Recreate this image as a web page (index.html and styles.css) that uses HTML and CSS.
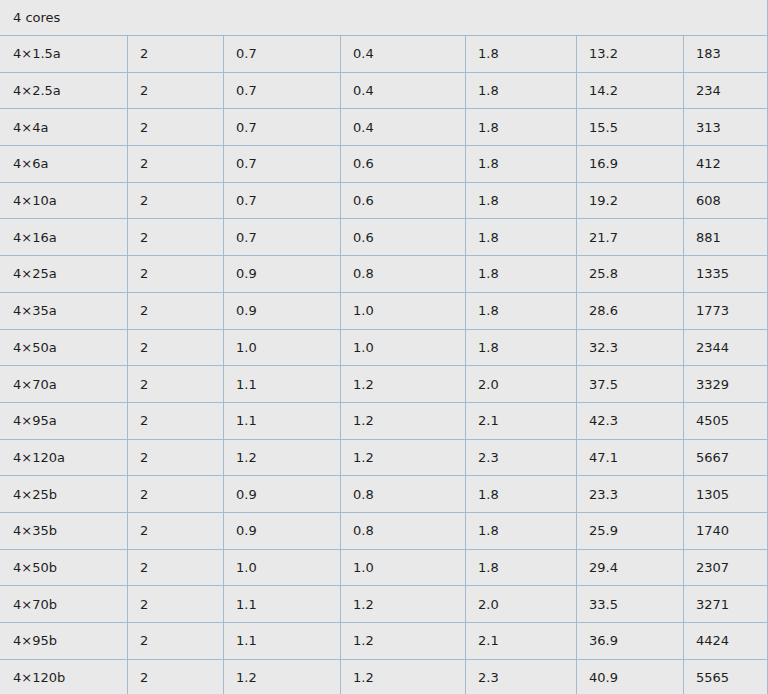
FILE: index.html
```html
<!DOCTYPE html>
<html>
<head>
<meta charset="utf-8">
<link rel="stylesheet" href="styles.css">
</head>
<body>
<table class="spec">
<colgroup>
<col class="c1"><col class="c2"><col class="c3"><col class="c4"><col class="c5"><col class="c6"><col class="c7">
</colgroup>
<tbody>
<tr class="head"><td colspan="7">4 cores</td></tr>
<tr><td>4×1.5a</td><td>2</td><td>0.7</td><td>0.4</td><td>1.8</td><td>13.2</td><td>183</td></tr>
<tr><td>4×2.5a</td><td>2</td><td>0.7</td><td>0.4</td><td>1.8</td><td>14.2</td><td>234</td></tr>
<tr><td>4×4a</td><td>2</td><td>0.7</td><td>0.4</td><td>1.8</td><td>15.5</td><td>313</td></tr>
<tr><td>4×6a</td><td>2</td><td>0.7</td><td>0.6</td><td>1.8</td><td>16.9</td><td>412</td></tr>
<tr><td>4×10a</td><td>2</td><td>0.7</td><td>0.6</td><td>1.8</td><td>19.2</td><td>608</td></tr>
<tr><td>4×16a</td><td>2</td><td>0.7</td><td>0.6</td><td>1.8</td><td>21.7</td><td>881</td></tr>
<tr><td>4×25a</td><td>2</td><td>0.9</td><td>0.8</td><td>1.8</td><td>25.8</td><td>1335</td></tr>
<tr><td>4×35a</td><td>2</td><td>0.9</td><td>1.0</td><td>1.8</td><td>28.6</td><td>1773</td></tr>
<tr><td>4×50a</td><td>2</td><td>1.0</td><td>1.0</td><td>1.8</td><td>32.3</td><td>2344</td></tr>
<tr><td>4×70a</td><td>2</td><td>1.1</td><td>1.2</td><td>2.0</td><td>37.5</td><td>3329</td></tr>
<tr><td>4×95a</td><td>2</td><td>1.1</td><td>1.2</td><td>2.1</td><td>42.3</td><td>4505</td></tr>
<tr><td>4×120a</td><td>2</td><td>1.2</td><td>1.2</td><td>2.3</td><td>47.1</td><td>5667</td></tr>
<tr><td>4×25b</td><td>2</td><td>0.9</td><td>0.8</td><td>1.8</td><td>23.3</td><td>1305</td></tr>
<tr><td>4×35b</td><td>2</td><td>0.9</td><td>0.8</td><td>1.8</td><td>25.9</td><td>1740</td></tr>
<tr><td>4×50b</td><td>2</td><td>1.0</td><td>1.0</td><td>1.8</td><td>29.4</td><td>2307</td></tr>
<tr><td>4×70b</td><td>2</td><td>1.1</td><td>1.2</td><td>2.0</td><td>33.5</td><td>3271</td></tr>
<tr><td>4×95b</td><td>2</td><td>1.1</td><td>1.2</td><td>2.1</td><td>36.9</td><td>4424</td></tr>
<tr><td>4×120b</td><td>2</td><td>1.2</td><td>1.2</td><td>2.3</td><td>40.9</td><td>5565</td></tr>
</tbody>
</table>
</body>
</html>
```
FILE: styles.css
```css
html, body {
  margin: 0;
  padding: 0;
  background: #e9e9e9;
}
.spec {
  border-collapse: collapse;
  table-layout: fixed;
  width: 767px;
  margin-top: -1px;
  font-family: "DejaVu Sans", Verdana, sans-serif;
  font-size: 13px;
  color: #1e1e1e;
  background: #e9e9e9;
}
.c1 { width: 127px; }
.c2 { width: 96px; }
.c3 { width: 117px; }
.c4 { width: 125px; }
.c5 { width: 111px; }
.c6 { width: 107px; }
.c7 { width: 84px; }
.spec td {
  border: 1px solid #a3bbcf;
  padding: 0 0 0 12px;
  height: 35.7px;
  vertical-align: middle;
  white-space: nowrap;
}
.spec td:first-child {
  border-left-color: #e9e9e9;
}
.spec tr.head td {
  height: 35px;
  border-right-width: 2px;
  border-top-color: #e9e9e9;
}
```
